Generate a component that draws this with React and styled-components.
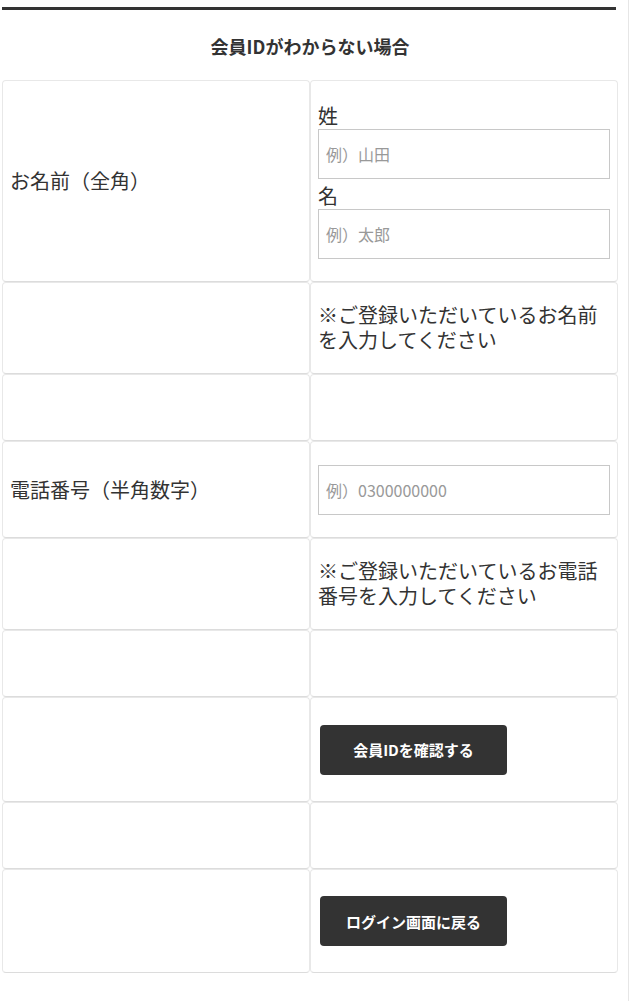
import React from "react";
import styled, { createGlobalStyle } from "styled-components";

const GlobalStyle = createGlobalStyle`
  html, body {
    margin: 0;
    padding: 0;
    background: #fff;
  }
  body {
    font-family: "Noto Sans CJK JP", "Noto Sans", sans-serif;
    color: #333;
    text-spacing-trim: space-all;
  }
  * {
    box-sizing: border-box;
  }
`;

const Page = styled.div`
  width: 629px;
  min-height: 1001px;
  border-right: 1px solid #e6e6e6;
  padding: 7px 0 0 2px;
`;

const Frame = styled.div`
  width: 616px;
`;

const TopBar = styled.div`
  width: 614px;
  height: 3px;
  background: #333;
`;

const Heading = styled.h2`
  margin: 0;
  height: 70px;
  display: flex;
  align-items: center;
  justify-content: center;
  font-size: 18px;
  font-weight: 700;
  line-height: 26px;
  padding-top: 2px;
`;

const Table = styled.div`
  display: grid;
  grid-template-columns: 308px 308px;
`;

const Cell = styled.div`
  display: flex;
  flex-direction: column;
  justify-content: center;
  min-height: ${(p) => p.h}px;
  padding: 0 7px;
  border: 1px solid #e8e8e8;
  border-bottom-color: #dcdcdc;
  border-radius: 4px;
  background: #fff;
`;

const Label = styled.div`
  font-size: 20px;
  line-height: 26px;
  color: #333;
`;

const FieldTitle = styled.div`
  font-size: 20px;
  line-height: 26px;
  color: #333;
`;

const Note = styled.p`
  margin: 0;
  font-size: 20px;
  line-height: 25px;
  color: #333;
  padding-bottom: 2px;
`;

const Input = styled.input`
  display: block;
  width: 100%;
  height: 50px;
  margin: 0 0 ${(p) => p.gap || 0}px;
  padding: 0 7px;
  border: 1px solid #c8c8c8;
  border-radius: 0;
  font-family: "Noto Sans CJK JP", "Noto Sans", sans-serif;
  font-size: 16px;
  color: #333;
  background: #fff;
  outline: none;

  &::placeholder {
    color: #999;
  }
`;

const Button = styled.button`
  width: 187px;
  height: 50px;
  margin-left: 2px;
  border: none;
  border-radius: 4px;
  background: #333;
  color: #fff;
  font-family: "Noto Sans CJK JP", "Noto Sans", sans-serif;
  font-size: 15px;
  font-weight: 700;
  cursor: pointer;
`;

const Row = ({ h, left, children }) => (
  <>
    <Cell h={h}>{left && <Label>{left}</Label>}</Cell>
    <Cell h={h}>{children}</Cell>
  </>
);

export default function App() {
  return (
    <>
      <GlobalStyle />
      <Page>
        <Frame>
          <TopBar />
          <Heading>会員IDがわからない場合</Heading>
          <Table>
            <Row h={202} left="お名前（全角）">
              <FieldTitle>姓</FieldTitle>
              <Input placeholder="例）山田" gap={4} />
              <FieldTitle>名</FieldTitle>
              <Input placeholder="例）太郎" />
            </Row>
            <Row h={92}>
              <Note>※ご登録いただいているお名前を入力してください</Note>
            </Row>
            <Row h={67} />
            <Row h={97} left="電話番号（半角数字）">
              <Input placeholder="例）0300000000" />
            </Row>
            <Row h={92}>
              <Note>※ご登録いただいているお電話番号を入力してください</Note>
            </Row>
            <Row h={67} />
            <Row h={105}>
              <Button>会員IDを確認する</Button>
            </Row>
            <Row h={67} />
            <Row h={104}>
              <Button>ログイン画面に戻る</Button>
            </Row>
          </Table>
        </Frame>
      </Page>
    </>
  );
}
